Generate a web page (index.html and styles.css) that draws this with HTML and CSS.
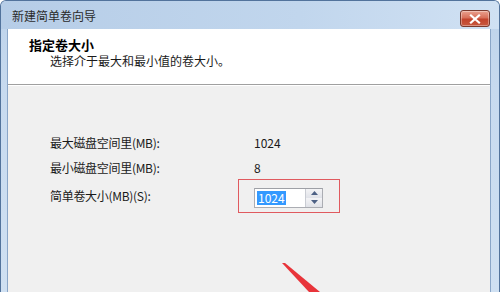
FILE: index.html
```html
<!DOCTYPE html>
<html lang="zh-CN">
<head>
  <meta charset="UTF-8">
  <meta name="viewport" content="width=device-width, initial-scale=1.0">
  <link rel="stylesheet" href="styles.css">
</head>
<body>
  <div class="window">
    <div class="titlebar">
      <span class="title">新建简单卷向导</span>
      <button class="close" aria-label="关闭">
        <svg width="12" height="10" viewBox="0 0 12 10">
          <path d="M2 1.5 L10 8.5 M10 1.5 L2 8.5" stroke="#fff" stroke-width="2.2" stroke-linecap="square"/>
        </svg>
      </button>
    </div>

    <div class="client">
      <div class="header">
        <div class="header-title">指定卷大小</div>
        <div class="header-sub">选择介于最大和最小值的卷大小。</div>
      </div>

      <div class="body">
        <div class="fields">
          <span class="label">最大磁盘空间里(MB):</span>
          <span class="value">1024</span>

          <span class="label">最小磁盘空间里(MB):</span>
          <span class="value">8</span>

          <span class="label">简单卷大小(MB)(S):</span>
          <div class="spin-wrap">
            <div class="spinbox">
              <div class="spin-input"><span class="selected">1024</span></div>
              <div class="spin-buttons">
                <div class="spin-btn">
                  <svg width="7" height="4" viewBox="0 0 7 4"><path d="M0 4 L3.5 0 L7 4 Z" fill="#4d6185"/></svg>
                </div>
                <div class="spin-btn">
                  <svg width="7" height="4" viewBox="0 0 7 4"><path d="M0 0 L3.5 4 L7 0 Z" fill="#4d6185"/></svg>
                </div>
              </div>
            </div>
            <div class="highlight"></div>
          </div>
        </div>
      </div>
    </div>

    <svg class="arrow" width="500" height="292" viewBox="0 0 500 292">
      <polygon points="282,263 285,263 320,292 309,292" fill="#e8343a"/>
    </svg>
  </div>
</body>
</html>
```

FILE: styles.css
```css
body {
  margin: 0;
  font-family: "Noto Sans CJK SC", "Noto Sans", sans-serif;
  font-size: 12px;
  color: #1a1a1a;
  background: #ffffff;
}

.window {
  position: relative;
  width: 500px;
  height: 292px;
  box-sizing: border-box;
  border: 1px solid #52739c;
  border-bottom: none;
  border-radius: 6px 6px 0 0;
  background: linear-gradient(to bottom, #bcd2ea 0%, #c7daef 30%, #cfe0f2 100%);
  display: flex;
  flex-direction: column;
  overflow: hidden;
}

.titlebar {
  height: 28px;
  display: flex;
  align-items: flex-start;
  justify-content: space-between;
  background: linear-gradient(to right, #b6cde7 0%, #c1d6ed 60%, #d0e1f3 100%);
}

.title {
  margin: 7px 0 0 11px;
  font-size: 12px;
  color: #2b2b2b;
  line-height: 16px;
}

.close {
  margin: 9px 9px 0 0;
  width: 30px;
  height: 17px;
  padding: 0;
  border: 1px solid #7a3a2e;
  border-radius: 3px;
  background: linear-gradient(to bottom, #e9a18f 0%, #d8705a 45%, #c2432c 55%, #c85a40 100%);
  display: flex;
  align-items: center;
  justify-content: center;
  box-shadow: inset 0 0 0 1px rgba(255, 255, 255, 0.35);
}

.client {
  flex: 1;
  margin: 0 8px 0 6px;
  border-left: 1px solid #8aa6c8;
  border-right: 1px solid #8aa6c8;
  background: #f0f0f0;
  display: flex;
  flex-direction: column;
}

.header {
  height: 56px;
  box-sizing: border-box;
  background: #ffffff;
  border-bottom: 1px solid #a0a0a0;
  box-shadow: 0 1px 0 #ffffff;
  padding: 8px 0 0 21px;
}

.header-title {
  font-weight: bold;
  font-size: 13px;
  line-height: 16px;
  color: #000;
}

.header-sub {
  margin-left: 21px;
  line-height: 15px;
  color: #1a1a1a;
}

.body {
  padding: 45px 0 0 42px;
}

.fields {
  display: grid;
  grid-template-columns: 204px auto;
  grid-template-rows: 25px 25px 32px;
  align-items: center;
}

.label,
.value {
  line-height: 16px;
}

.label {
  letter-spacing: -0.3px;
}

.spin-wrap {
  position: relative;
  justify-self: start;
  margin-left: 0;
  margin-top: 3px;
}

.spinbox {
  display: flex;
  width: 69px;
  height: 20px;
  box-sizing: border-box;
  border: 1px solid #abadb3;
  border-top-color: #9ea0a6;
  background: #ffffff;
}

.spin-input {
  flex: 1;
  display: flex;
  align-items: center;
  padding-left: 2px;
}

.selected {
  background: #3399ff;
  color: #ffffff;
  line-height: 14px;
  padding: 0 1px;
}

.spin-buttons {
  width: 16px;
  display: flex;
  flex-direction: column;
  border-left: 1px solid #c9ccd3;
}

.spin-btn {
  flex: 1;
  display: flex;
  align-items: center;
  justify-content: center;
  background: linear-gradient(to bottom, #f4f4f6, #e0e2e8);
}

.highlight {
  position: absolute;
  top: -9px;
  left: -16px;
  right: -17px;
  bottom: -5px;
  border: 1.5px solid #e05a5f;
}

.arrow {
  position: absolute;
  top: -1px;
  left: -1px;
  pointer-events: none;
}
```
